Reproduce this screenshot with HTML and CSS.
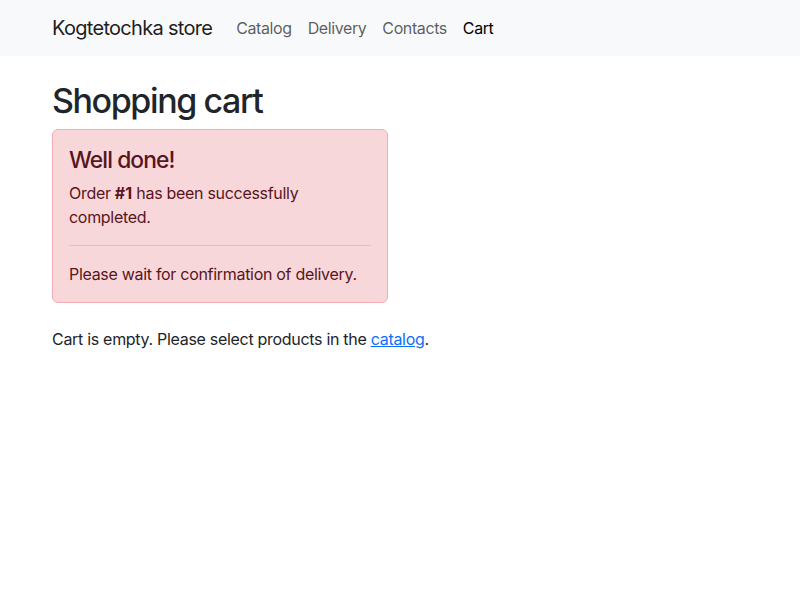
FILE: index.html
```html
<!DOCTYPE html>
<html lang="en">
<head>
<meta charset="utf-8">
<title>Shopping cart</title>
<link rel="stylesheet" href="styles.css">
</head>
<body>
<nav class="navbar">
  <div class="container nav-inner">
    <a class="brand" href="#">Kogtetochka store</a>
    <ul class="nav">
      <li><a class="nav-link" href="#">Catalog</a></li>
      <li><a class="nav-link" href="#">Delivery</a></li>
      <li><a class="nav-link" href="#">Contacts</a></li>
      <li><a class="nav-link active" href="#">Cart</a></li>
    </ul>
  </div>
</nav>
<main class="container main">
  <h1 class="title">Shopping cart</h1>
  <div class="row">
    <div class="col">
      <div class="alert">
        <h4 class="alert-heading">Well done!</h4>
        <p class="text">Order <b class="strong">#1</b> has been successfully completed.</p>
        <hr class="divider">
        <p class="text">Please wait for confirmation of delivery.</p>
      </div>
    </div>
  </div>
  <p class="text">Cart is empty. Please select products in the <a class="link" href="#">catalog</a>.</p>
</main>
</body>
</html>
```
FILE: styles.css
```css
* { box-sizing: border-box; }
html, body { margin: 0; padding: 0; }
body {
  font-family: Inter, "Noto Sans", "Liberation Sans", sans-serif;
  font-size: 16px;
  line-height: 1.5;
  letter-spacing: -0.3px;
  color: #212529;
  background: #fff;
}
.container {
  max-width: 720px;
  margin: 0 auto;
  padding: 0 12px;
}
.navbar {
  background: #f8f9fa;
  padding: 8px 0;
}
.nav-inner {
  display: flex;
  align-items: center;
}
.brand {
  font-size: 20px;
  line-height: 30px;
  letter-spacing: -0.7px;
  padding: 5px 0;
  margin-right: 16px;
  color: rgba(0,0,0,.9);
  text-decoration: none;
}
.nav {
  display: flex;
  list-style: none;
  margin: 0;
  padding: 0;
}
.nav-link {
  display: block;
  padding: 8px;
  letter-spacing: -0.4px;
  color: rgba(0,0,0,.65);
  text-decoration: none;
}
.nav-link.active { color: #000; }
.main { padding-top: 25px; }
.title {
  font-size: 34px;
  font-weight: 500;
  line-height: 1.2;
  letter-spacing: -1.4px;
  margin: 0 0 7px;
}
.row { display: flex; margin: 0 -12px; }
.col { width: 50%; padding: 0 12px; margin-bottom: 24px; }
.alert {
  background: #f8d7da;
  border: 1px solid #f1aeb5;
  color: #58151c;
  border-radius: 6px;
  padding: 16px;
}
.alert-heading {
  font-size: 22.8px;
  font-weight: 500;
  line-height: 1.2;
  letter-spacing: -0.9px;
  margin: 0 0 8px;
}
.text { margin: 0; }
.strong { font-weight: 700; letter-spacing: 0; }
.divider {
  margin: 16px 0;
  border: 0;
  border-top: 1px solid currentColor;
  opacity: .25;
}
.link { color: #0d6efd; text-decoration: underline; }
```
